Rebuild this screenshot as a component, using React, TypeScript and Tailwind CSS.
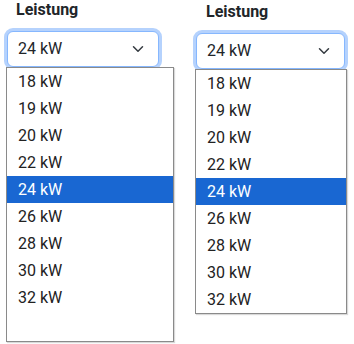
const options = [18, 19, 20, 22, 24, 26, 28, 30, 32];

function Chevron() {
  return (
    <svg
      width="16"
      height="12"
      viewBox="0 0 16 16"
      className="absolute right-[12px] top-1/2 -translate-y-1/2"
      fill="none"
      stroke="#343a40"
      strokeWidth="2"
      strokeLinecap="round"
      strokeLinejoin="round"
    >
      <path d="m2 5 6 6 6-6" />
    </svg>
  );
}

function SelectOpen({
  labelPad,
  selectWidth,
  listWidth,
  listHeight,
  top,
}: {
  labelPad: string;
  selectWidth: string;
  listWidth: string;
  listHeight: string;
  top: string;
}) {
  return (
    <div className={`flex flex-col ${top}`}>
      <label className={`${labelPad} text-[16px] leading-5 font-bold text-[#212529]`}>Leistung</label>
      <div
        className={`relative mt-[11px] ml-px ${selectWidth} h-[36px] flex items-center pl-[10px] rounded-[6px] border border-[#86b7fe] bg-white shadow-[0_0_0_3px_#b5d2fd] text-[16px] text-[#212529]`}
      >
        <span>24 kW</span>
        <Chevron />
      </div>
      <ul
        className={`relative z-10 ${listWidth} ${listHeight} border border-[#8a8a8a] bg-white shadow-[1px_1px_1px_rgba(0,0,0,0.15)]`}
      >
        {options.map((o) =>
          o === 24 ? (
            <li key={o} className="h-[27px] leading-[27px] pl-[11px] bg-[#1967d2] text-white text-[16px]">
              {o} kW
            </li>
          ) : (
            <li key={o} className="h-[27px] leading-[27px] pl-[11px] text-[#222222] text-[16px]">
              {o} kW
            </li>
          )
        )}
      </ul>
    </div>
  );
}

export default function App() {
  return (
    <div className="w-[354px] h-[344px] bg-white overflow-hidden flex items-start pl-[6px] gap-[21px] font-['Roboto',sans-serif]">
      <SelectOpen
        labelPad="pl-[10px]"
        selectWidth="w-[152px]"
        listWidth="w-[168px]"
        listHeight="h-[275px]"
        top="mt-0"
      />
      <SelectOpen
        labelPad="pl-[11px]"
        selectWidth="w-[149px]"
        listWidth="w-[152px]"
        listHeight="h-[245px]"
        top="mt-[2px]"
      />
    </div>
  );
}
